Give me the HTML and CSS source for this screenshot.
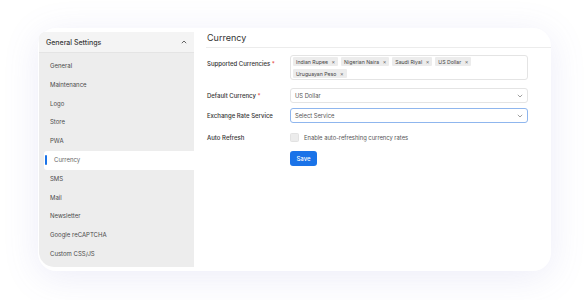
FILE: index.html
```html
<!DOCTYPE html>
<html lang="en">
<head>
    <meta charset="UTF-8">
    <meta name="viewport" content="width=device-width, initial-scale=1.0">
    <title>General Settings - Currency</title>
    <link rel="stylesheet" href="styles.css">
</head>
<body>
    <div class="page">
        <div class="card">
            <aside class="sidebar">
                <div class="sidebar-head">
                    <span>General Settings</span>
                    <svg class="chev-up" width="6" height="4" viewBox="0 0 6 4"><path d="M0.8 3.2 L3 1 L5.2 3.2" fill="none" stroke="#555" stroke-width="0.9"/></svg>
                </div>
                <ul class="menu">
                    <li class="menu-item">General</li>
                    <li class="menu-item">Maintenance</li>
                    <li class="menu-item">Logo</li>
                    <li class="menu-item">Store</li>
                    <li class="menu-item">PWA</li>
                    <li class="menu-item active">Currency</li>
                    <li class="menu-item">SMS</li>
                    <li class="menu-item">Mail</li>
                    <li class="menu-item">Newsletter</li>
                    <li class="menu-item">Google reCAPTCHA</li>
                    <li class="menu-item">Custom CSS/JS</li>
                </ul>
            </aside>

            <main class="panel">
                <h2 class="panel-title">Currency</h2>
                <form class="form">
                    <div class="row row-top">
                        <label class="label">Supported Currencies <span class="req">*</span></label>
                        <div class="multi">
                            <span class="chip">Indian Rupee <i>×</i></span>
                            <span class="chip">Nigerian Naira <i>×</i></span>
                            <span class="chip">Saudi Riyal <i>×</i></span>
                            <span class="chip">US Dollar <i>×</i></span>
                            <span class="chip">Uruguayan Peso <i>×</i></span>
                        </div>
                    </div>
                    <div class="row row-default">
                        <label class="label">Default Currency <span class="req">*</span></label>
                        <div class="select">
                            <span>US Dollar</span>
                            <svg width="6" height="4" viewBox="0 0 6 4"><path d="M0.8 0.8 L3 3 L5.2 0.8" fill="none" stroke="#888" stroke-width="0.8"/></svg>
                        </div>
                    </div>
                    <div class="row row-service">
                        <label class="label">Exchange Rate Service</label>
                        <div class="select focus">
                            <span>Select Service</span>
                            <svg width="6" height="4" viewBox="0 0 6 4"><path d="M0.8 0.8 L3 3 L5.2 0.8" fill="none" stroke="#888" stroke-width="0.8"/></svg>
                        </div>
                    </div>
                    <div class="row row-check">
                        <label class="label">Auto Refresh</label>
                        <div class="check">
                            <span class="box"></span>
                            <span>Enable auto-refreshing currency rates</span>
                        </div>
                    </div>
                    <div class="row row-save">
                        <span class="label"></span>
                        <button type="button" class="save">Save</button>
                    </div>
                </form>
            </main>
        </div>
    </div>
</body>
</html>
```

FILE: styles.css
```css
body {
    margin: 0;
    background: #fff;
    font-family: Inter, "Noto Sans", sans-serif;
    color: #444;
}
.page {
    padding: 28px 37px 29px 38px;
}
.card {
    display: flex;
    height: 243px;
    background: #fff;
    border-radius: 18px;
    box-shadow: 0 6px 36px rgba(110, 110, 200, 0.13);
}

/* Sidebar */
.sidebar {
    width: 155px;
    margin: 4px 0 4px 1px;
    background: #ededed;
    border-radius: 7px 0 0 15px;
}
.sidebar-head {
    display: flex;
    align-items: center;
    justify-content: space-between;
    height: 20px;
    padding: 0 7px 0 7px;
    background: #f4f4f4;
    border-bottom: 1px solid #e4e4e4;
    border-radius: 7px 0 0 0;
    font-size: 7px;
    font-weight: 500;
    color: #3a3a3a;
}
.menu {
    list-style: none;
    margin: 0;
    padding: 4px 0 0 0;
}
.menu-item {
    height: 18.8px;
    line-height: 18.8px;
    padding-left: 11px;
    font-size: 6px;
    color: #4a4a4a;
}
.menu-item.active {
    position: relative;
    margin-left: 5px;
    padding-left: 10px;
    background: #fff;
    border-radius: 3px 0 0 3px;
    color: #666;
}
.menu-item.active::before {
    content: "";
    position: absolute;
    left: 1px;
    top: 4px;
    width: 2px;
    height: 10px;
    background: #1a73e8;
    border-radius: 1px;
}

/* Panel */
.panel {
    flex: 1;
    padding-left: 12px;
}
.panel-title {
    margin: 0;
    padding: 4px 0 3px 1px;
    font-size: 9px;
    line-height: 12px;
    font-weight: 400;
    color: #333;
    border-bottom: 1px solid #ececec;
}
.form {
    display: flex;
    flex-direction: column;
    padding: 7px 23px 0 1px;
}
.row {
    display: flex;
    align-items: center;
}
.label {
    width: 83px;
    flex-shrink: 0;
    font-size: 6px;
    font-weight: 500;
    color: #333;
}
.req {
    color: #e53935;
}
.row-top {
    align-items: flex-start;
}
.row-top .label {
    padding-top: 5px;
}
.row-default { margin-top: 8px; }
.row-service { margin-top: 5px; }
.row-check { margin-top: 10px; }
.row-save { margin-top: 9px; }

.multi {
    flex: 1;
    display: flex;
    flex-wrap: wrap;
    align-content: flex-start;
    gap: 3px 3px;
    padding: 1px 2px;
    border: 1px solid #e4e4e4;
    border-radius: 3px;
}
.chip {
    display: flex;
    align-items: center;
    gap: 3.5px;
    height: 9px;
    padding: 0 3px 0 3px;
    background: #ececec;
    border-radius: 1px;
    font-size: 5.2px;
    color: #444;
}
.chip i {
    font-style: normal;
    font-size: 5.5px;
    color: #555;
}
.select {
    flex: 1;
    display: flex;
    align-items: center;
    justify-content: space-between;
    height: 13px;
    padding: 0 4px 0 4px;
    border: 1px solid #e4e4e4;
    border-radius: 3px;
    font-size: 5.8px;
    color: #555;
}
.select.focus {
    border-color: #8fb6ee;
}
.check {
    display: flex;
    align-items: center;
    gap: 5px;
    font-size: 5.8px;
    color: #555;
}
.box {
    width: 7px;
    height: 7px;
    background: #ececec;
    border: 0.5px solid #e2e2e2;
    border-radius: 1.5px;
}
.save {
    width: 27px;
    height: 15px;
    padding: 0;
    border: none;
    border-radius: 3px;
    background: #1a73e8;
    color: #fff;
    font-family: Inter, "Noto Sans", sans-serif;
    font-size: 6px;
    font-weight: 500;
}
```
